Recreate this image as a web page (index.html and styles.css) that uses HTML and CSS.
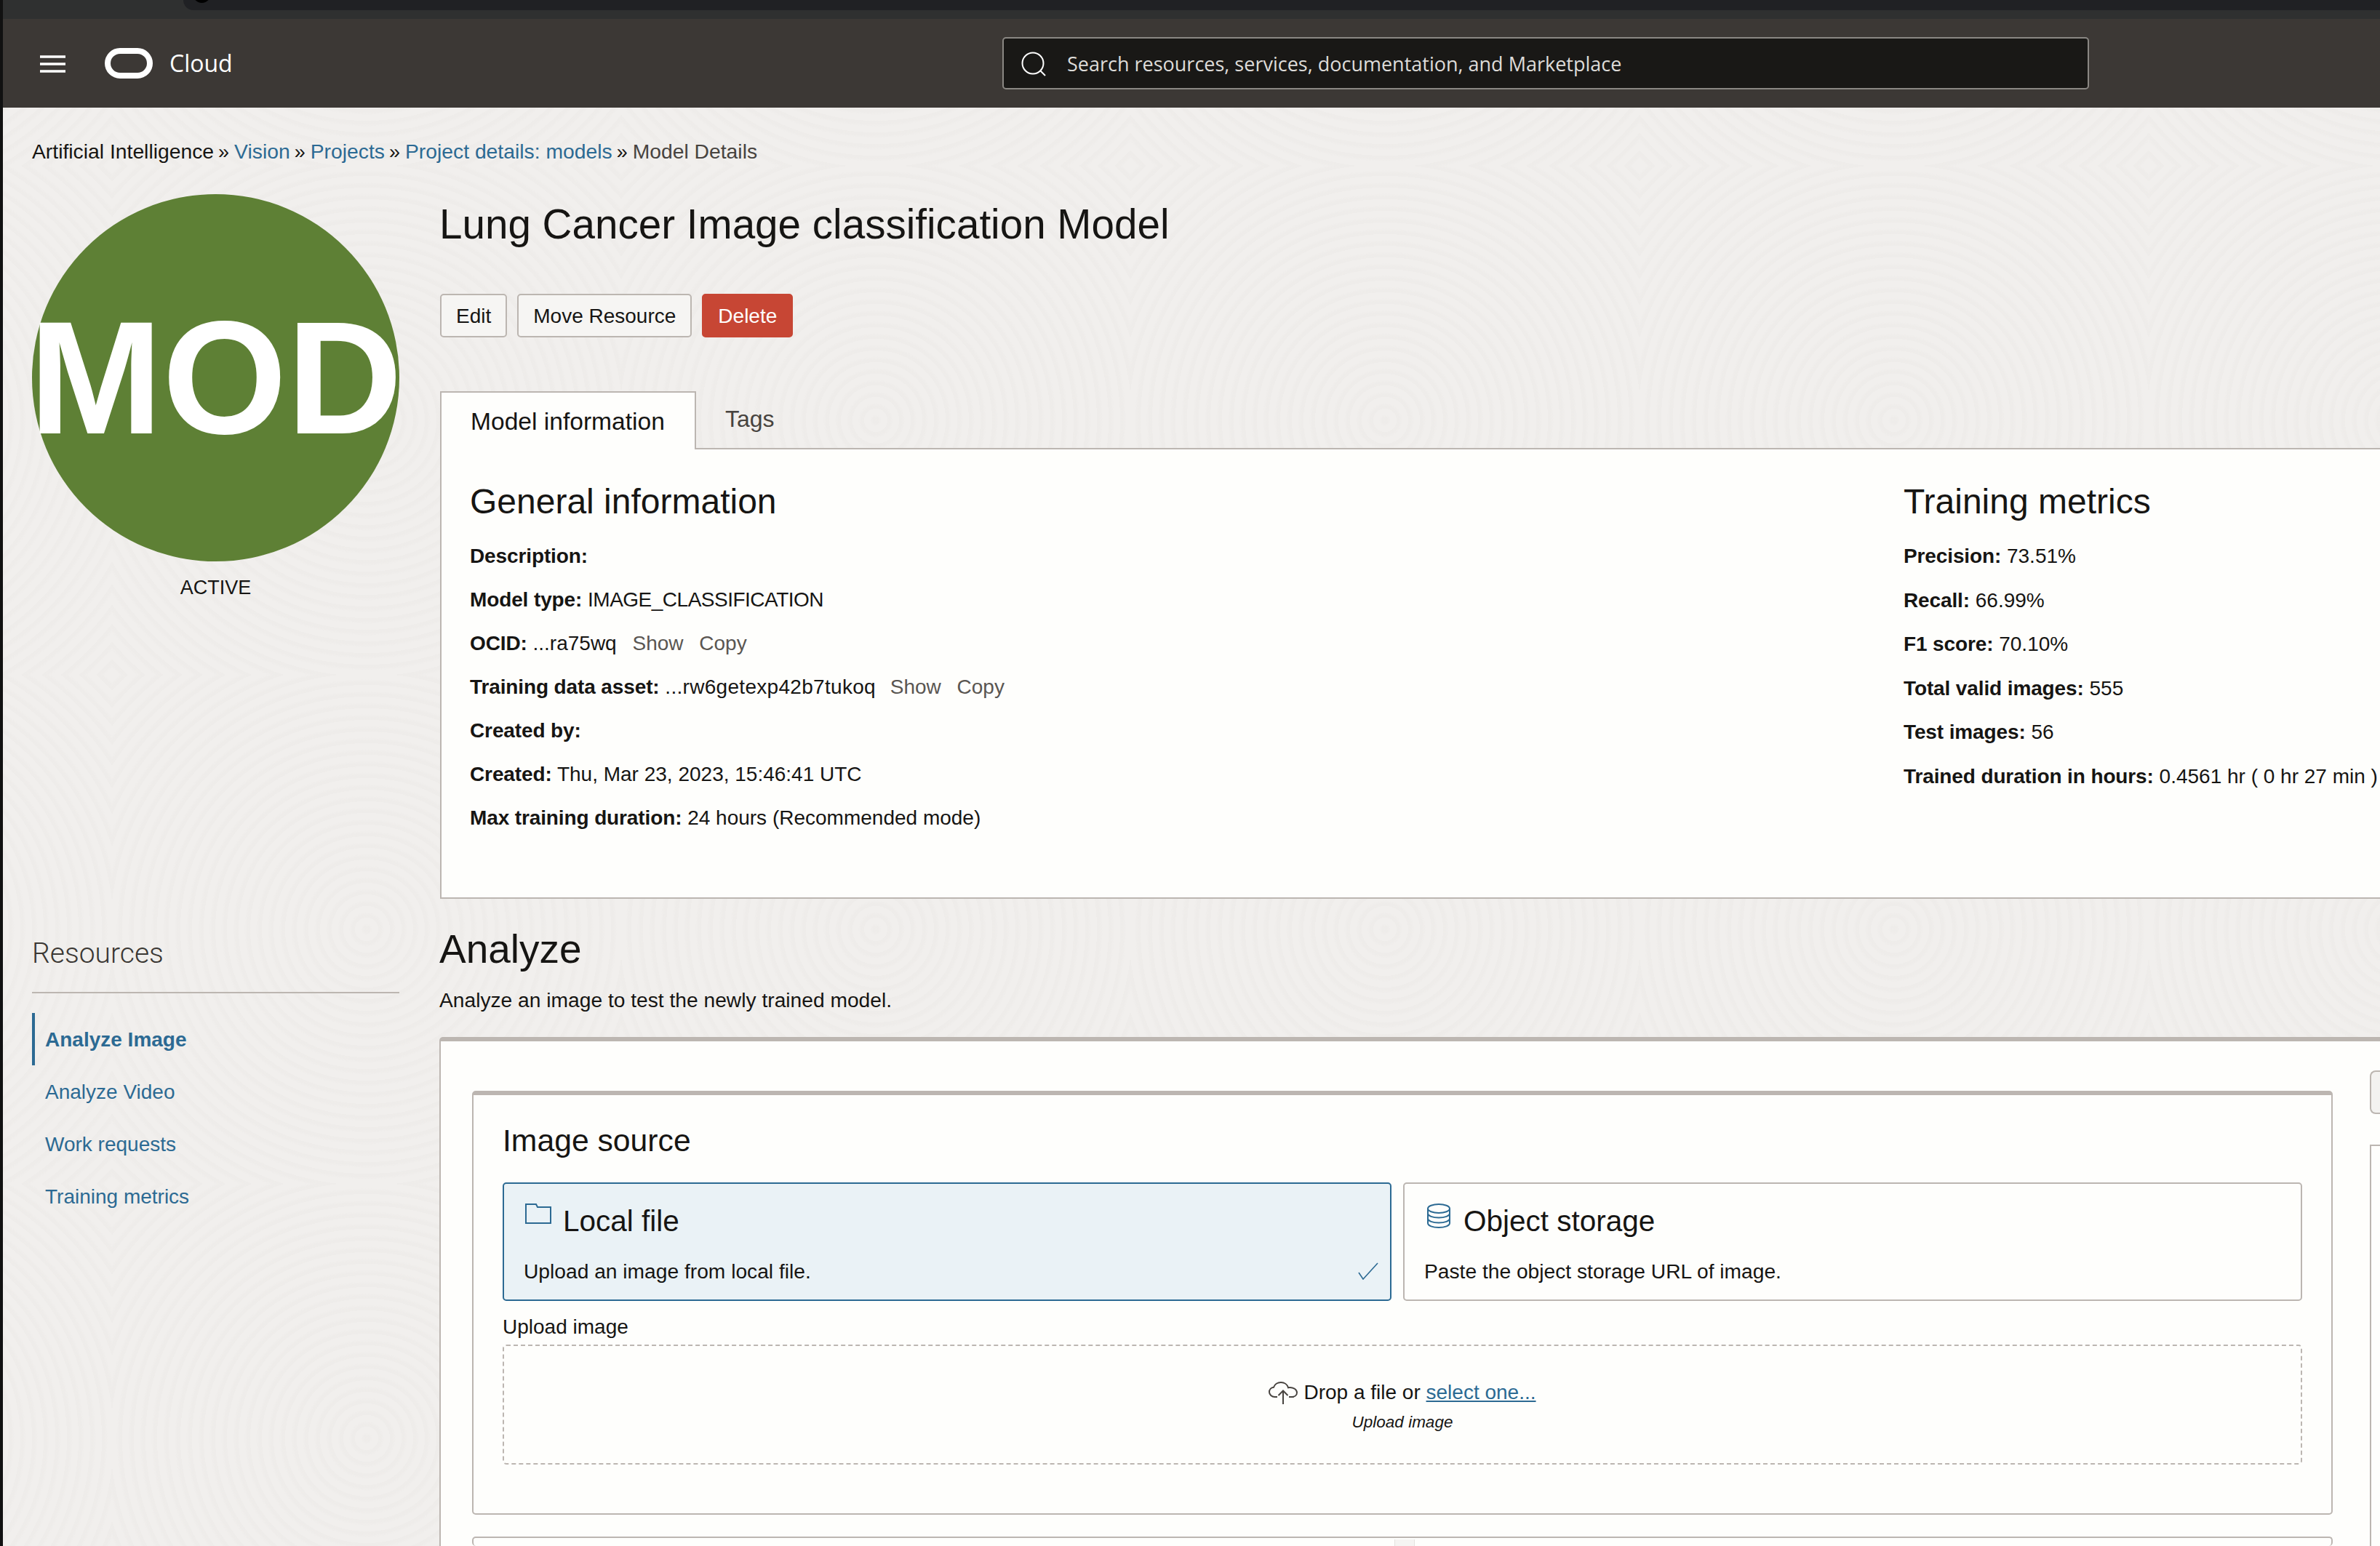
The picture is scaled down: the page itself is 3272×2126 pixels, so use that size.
FILE: index.html
```html
<!DOCTYPE html>
<html lang="en">
	<head>
		<meta charset="utf-8">
		<title>Model Details</title>
		<link rel="stylesheet" href="styles.css">
	</head>
	<body>
		<div class="browser-bar"><div class="browser-tabs"><span class="browser-dot"></span></div></div>

		<header class="topbar">
			<div class="brand">
				<svg class="menu-icon" width="35" height="24" viewBox="0 0 35 24"><path d="M0 2h35M0 12h35M0 22h35" stroke="#fff" stroke-width="3.5"/></svg>
				<svg class="logo" width="66" height="42" viewBox="0 0 66 42"><rect x="4" y="4" width="58" height="34" rx="17" fill="none" stroke="#fff" stroke-width="8"/></svg>
				<span class="brand-name">Cloud</span>
			</div>
			<div class="search">
				<svg width="36" height="34" viewBox="0 0 36 34"><circle cx="17" cy="16" r="14.5" fill="none" stroke="#fff" stroke-width="2"/><path d="M27 26l7 7" stroke="#fff" stroke-width="2"/></svg>
				<span>Search resources, services, documentation, and Marketplace</span>
			</div>
		</header>

		<div class="content">
			<nav class="crumbs">
				<span>Artificial Intelligence</span><i>»</i><a>Vision</a><i>»</i><a>Projects</a><i>»</i><a>Project details: models</a><i>»</i><span class="crumb-last">Model Details</span>
			</nav>

			<div class="columns">
				<aside class="sidebar">
					<div class="badge">MOD</div>
					<div class="state">ACTIVE</div>
					<h3 class="res-title">Resources</h3>
					<ul class="res-list">
						<li class="active">Analyze Image</li>
						<li>Analyze Video</li>
						<li>Work requests</li>
						<li>Training metrics</li>
					</ul>
				</aside>

				<main class="main">
					<h1 class="title">Lung Cancer Image classification Model</h1>
					<div class="actions">
						<button class="btn">Edit</button>
						<button class="btn">Move Resource</button>
						<button class="btn btn-danger">Delete</button>
					</div>

					<div class="tabs">
						<div class="tab tab-on">Model information</div>
						<div class="tab">Tags</div>
					</div>
					<section class="info">
						<div class="info-col">
							<h2>General information</h2>
							<p><b>Description:</b></p>
							<p><b>Model type:</b> <span class="tight">IMAGE_CLASSIFICATION</span></p>
							<p><b>OCID:</b> ...ra75wq <a class="mini">Show</a> <a class="mini">Copy</a></p>
							<p><b>Training data asset:</b> <span class="hash">...rw6getexp42b7tukoq</span> <a class="mini">Show</a> <a class="mini">Copy</a></p>
							<p><b>Created by:</b></p>
							<p><b>Created:</b> Thu, Mar 23, 2023, 15:46:41 UTC</p>
							<p><b>Max training duration:</b> 24 hours (Recommended mode)</p>
						</div>
						<div class="info-col metrics">
							<h2>Training metrics</h2>
							<p><b>Precision:</b> 73.51%</p>
							<p><b>Recall:</b> 66.99%</p>
							<p><b>F1 score:</b> 70.10%</p>
							<p><b>Total valid images:</b> 555</p>
							<p><b>Test images:</b> 56</p>
							<p><b>Trained duration in hours:</b> 0.4561 hr ( 0 hr 27 min )</p>
						</div>
					</section>

					<h1 class="analyze-title">Analyze</h1>
					<div class="analyze-sub">Analyze an image to test the newly trained model.</div>

					<section class="analyze">
						<div class="analyze-left">
							<div class="card">
								<h3 class="card-title">Image source</h3>
								<div class="tiles">
									<div class="tile tile-on">
										<div class="tile-head">
											<svg width="36" height="28" viewBox="0 0 36 28"><path d="M1 1h14l2 4h18v22H1z" fill="none" stroke="#2c6a93" stroke-width="2"/></svg>
											<span>Local file</span>
										</div>
										<div class="tile-desc">Upload an image from local file.</div>
										<svg class="tile-check" width="28" height="24" viewBox="0 0 28 24"><path d="M1 14l6 9L27 1" fill="none" stroke="#2c6a93" stroke-width="1.6"/></svg>
									</div>
									<div class="tile tile-store">
										<div class="tile-head">
											<svg width="32" height="34" viewBox="0 0 32 34"><ellipse cx="16" cy="7" rx="15" ry="6" fill="none" stroke="#2c6a93" stroke-width="2"/><path d="M1 7v20c0 3.500 6.700 6 15 6s15-2.500 15-6V7M1 13.500c0 3.500 6.700 6 15 6s15-2.500 15-6M1 20.500c0 3.500 6.700 6 15 6s15-2.500 15-6" fill="none" stroke="#2c6a93" stroke-width="2"/></svg>
											<span>Object storage</span>
										</div>
										<div class="tile-desc">Paste the object storage URL of image.</div>
									</div>
								</div>
								<label class="field-label">Upload image</label>
								<div class="dropzone">
									<div class="drop-line">
										<svg width="40" height="31" viewBox="0 0 40 31"><path d="M12 21H8.500C4.500 21 1 18 1 14.300 1 11 3.500 8.300 7 7.800 8.300 3.700 12.500 1 17 1c4.800 0 8.800 3 10 7.200 .8-.2 1.500-.3 2.300-.3C34.700 7.900 39 11 39 15c0 3.500-3 6-7 6h-4" fill="none" stroke="#47433f" stroke-width="2"/><path d="M20 31V13M13.500 19l6.500-6.500 6.500 6.500" fill="none" stroke="#47433f" stroke-width="2"/></svg>
										<span>Drop a file or <a class="drop-link">select one...</a></span>
									</div>
									<div class="drop-hint">Upload image</div>
								</div>
							</div>
							<div class="card card-next"><div class="next-strip"></div></div>
						</div>
						<div class="analyze-right">
							<div class="stub-btn"></div>
							<div class="stub-box"></div>
						</div>
					</section>
				</main>
			</div>
		</div>
	</body>
</html>
```

FILE: styles.css
```css
* {
	box-sizing: border-box;
}

html, body {
	margin: 0;
	height: 2126px;
	overflow: hidden;
}

body {
	width: 3272px;
	border-left: 4px solid #111;
	font-family: "Liberation Sans", Arial, sans-serif;
	font-size: 28px;
	color: #161513;
	background: #f1efed;
}

.browser-bar {
	height: 26px;
	padding-left: 248px;
	background: #2f3030;
}

.browser-tabs {
	height: 14px;
	padding-left: 13px;
	background: #202124;
	border-bottom-left-radius: 14px;
	overflow: hidden;
}

.browser-dot {
	display: block;
	width: 25px;
	height: 25px;
	margin-top: -21px;
	border-radius: 50%;
	background: #000;
}

.topbar {
	display: flex;
	align-items: center;
	height: 122px;
	background: #3c3835;
}

.brand {
	display: flex;
	align-items: center;
	width: 1374px;
	padding-left: 51px;
	color: #fff;
}

.menu-icon {
	margin-right: 54px;
	margin-top: 2px;
}

.logo {
	margin-right: 23px;
}

.brand-name {
	font-family: "Open Sans", sans-serif;
	font-size: 32px;
	margin-top: -2px;
}

.search {
	display: flex;
	align-items: center;
	gap: 28px;
	width: 1494px;
	height: 72px;
	padding: 1px 0 0 23px;
	background: #191816;
	border: 2px solid #8a8783;
	border-radius: 5px;
	color: #dedcd9;
	font-family: "Open Sans", sans-serif;
	font-size: 27px;
}

.content {
	height: 1978px;
	padding: 40px 0 0 40px;
	background-color: #f1efed;
	background-image: repeating-radial-gradient(circle at 350px 350px, rgba(120, 110, 100, 0.02) 0, rgba(120, 110, 100, 0.02) 4px, transparent 8px, transparent 16px);
	background-size: 700px 700px;
	background-position: 150px 80px;
	overflow: hidden;
}

.crumbs {
	height: 40px;
	line-height: 40px;
	font-size: 28.3px;
	white-space: nowrap;
}

.crumbs i {
	margin: 0 7px 0 6px;
	font-style: normal;
	font-size: 27px;
}

.crumbs a {
	color: #2c6a93;
}

.crumb-last {
	color: #47433f;
}

.columns {
	display: flex;
	gap: 55px;
	margin-top: 39px;
}

.sidebar {
	flex: 0 0 505px;
}

.badge {
	display: flex;
	justify-content: center;
	align-items: center;
	width: 505px;
	height: 505px;
	padding-top: 2px;
	border-radius: 50%;
	background: #5e8035;
	color: #fff;
	font-size: 220px;
	font-weight: bold;
	white-space: nowrap;
}

.state {
	margin-top: 16px;
	font-size: 27px;
	line-height: 40px;
	text-align: center;
}

.res-title {
	margin: 455px 0 0;
	padding-bottom: 25px;
	border-bottom: 2px solid #bcb6b1;
	font-family: Roboto, sans-serif;
	font-size: 39px;
	font-weight: 300;
	line-height: 56px;
	color: #3a3733;
}

.res-list {
	list-style: none;
	margin: 27px 0 0;
	padding: 0;
	color: #2c6a93;
}

.res-list li {
	height: 72px;
	line-height: 74px;
	padding-left: 14px;
	border-left: 4px solid transparent;
}

.res-list .active {
	border-left-color: #2c6a93;
	font-weight: bold;
}

.main {
	flex: 0 0 2668px;
}

.title {
	margin: 0;
	font-size: 56.6px;
	font-weight: normal;
	line-height: 84px;
}

.actions {
	display: flex;
	gap: 14px;
	margin-top: 53px;
	padding-left: 1px;
}

.btn {
	height: 60px;
	padding: 1px 20px 0;
	background: #f6f5f3;
	border: 2px solid #bcb6b1;
	border-radius: 5px;
	font: 28px "Liberation Sans", Arial, sans-serif;
	color: #161513;
}

.btn-danger {
	background: #c74634;
	border-color: #c74634;
	color: #fff;
}

.tabs {
	display: flex;
	height: 80px;
	margin: 74px 0 -2px 1px;
}

.tab {
	padding: 20px 40px 0;
	font-size: 32px;
	color: #47433f;
}

.tab-on {
	position: relative;
	width: 352px;
	padding-top: 21px;
	background: #fefefc;
	border: 2px solid #bcb6b1;
	border-bottom: 0;
	font-size: 33.6px;
	color: #161513;
	z-index: 1;
}

.info {
	display: flex;
	height: 620px;
	margin-left: 1px;
	padding: 42px 0 0 39px;
	background: #fefefc;
	border: 2px solid #bcb6b1;
	border-right: 0;
}

.info-col {
	flex: 0 0 1971px;
}

.metrics {
	flex: 0 0 auto;
	white-space: nowrap;
}

.info h2 {
	margin: 0 0 15px;
	font-size: 48px;
	font-weight: normal;
	line-height: 60px;
}

.info p {
	margin: 0;
	height: 60px;
	line-height: 60px;
	white-space: nowrap;
}

.metrics p {
	height: 60.5px;
}

.info b {
	letter-spacing: -0.12px;
}

.tight {
	letter-spacing: -0.5px;
}

.hash {
	margin-right: -2px;
	letter-spacing: 0.3px;
}

.mini {
	margin-left: 14px;
	color: #5a5652;
}

.analyze-title {
	margin: 29px 0 0;
	font-size: 55px;
	font-weight: normal;
	line-height: 80px;
}

.analyze-sub {
	margin-top: 10px;
	font-size: 28.2px;
	line-height: 40px;
}

.analyze {
	display: flex;
	gap: 51px;
	height: 700px;
	margin-top: 31px;
	padding: 68px 0 0 43px;
	background: #fefefc;
	border-left: 2px solid #bcb6b1;
	border-top: 6px solid #bcb6b1;
	border-top-left-radius: 5px;
}

.analyze-left {
	flex: 0 0 2558px;
}

.card {
	height: 583px;
	padding: 37px 40px 0;
	border: 2px solid #bcb6b1;
	border-top-width: 6px;
	border-radius: 5px;
}

.card-title {
	margin: 0;
	font-size: 42.7px;
	font-weight: normal;
	line-height: 50px;
}

.tiles {
	display: grid;
	grid-template-columns: 1222px 1fr;
	gap: 16px;
	margin-top: 33px;
}

.tile {
	position: relative;
	height: 163px;
	padding: 22px 27px 0;
	border: 2px solid #bcb6b1;
	border-radius: 5px;
}

.tile-on {
	background: #eaf2f6;
	border-color: #2c6a93;
}

.tile-store {
	padding-left: 27px;
}

.tile-head {
	display: flex;
	align-items: flex-start;
	gap: 16px;
	height: 68px;
	padding-left: 2px;
	font-size: 40.5px;
	line-height: 58px;
}

.tile-store .tile-head {
	gap: 18px;
	padding-left: 4px;
}

.tile-head svg {
	flex: none;
	margin-top: 5px;
}

.tile-desc {
	margin-top: 12px;
	font-size: 28.2px;
	line-height: 36px;
}

.tile-check {
	position: absolute;
	right: 16px;
	bottom: 27px;
}

.field-label {
	display: block;
	margin-top: 18px;
	line-height: 36px;
}

.dropzone {
	height: 165px;
	margin-top: 6px;
	padding-top: 46px;
	border: 2px dashed #bcb6b1;
	border-radius: 5px;
	text-align: center;
}

.drop-line {
	display: flex;
	justify-content: center;
	align-items: center;
	gap: 8px;
	height: 36px;
}

.drop-link {
	color: #2c6a93;
	text-decoration: underline;
}

.drop-hint {
	margin-top: 8px;
	font-size: 22.5px;
	font-style: italic;
	line-height: 30px;
}

.card-next {
	position: relative;
	height: 13px;
	margin-top: 30px;
	border-width: 2px;
	border-bottom: 0;
	padding: 0;
}

.next-strip {
	position: absolute;
	left: 1266px;
	top: 2px;
	width: 28px;
	height: 9px;
	background: #f5f4f2;
	border-left: 1px solid #e4e2df;
	border-right: 1px solid #e4e2df;
}

.analyze-right {
	flex: 0 0 40px;
}

.stub-btn {
	height: 60px;
	margin-top: -28px;
	background: #f3f2f0;
	border: 2px solid #bcb6b1;
	border-right: 0;
	border-radius: 8px 0 0 8px;
}

.stub-box {
	height: 552px;
	margin-top: 42px;
	border: 2px solid #bcb6b1;
	border-right: 0;
	border-bottom: 0;
}
```
